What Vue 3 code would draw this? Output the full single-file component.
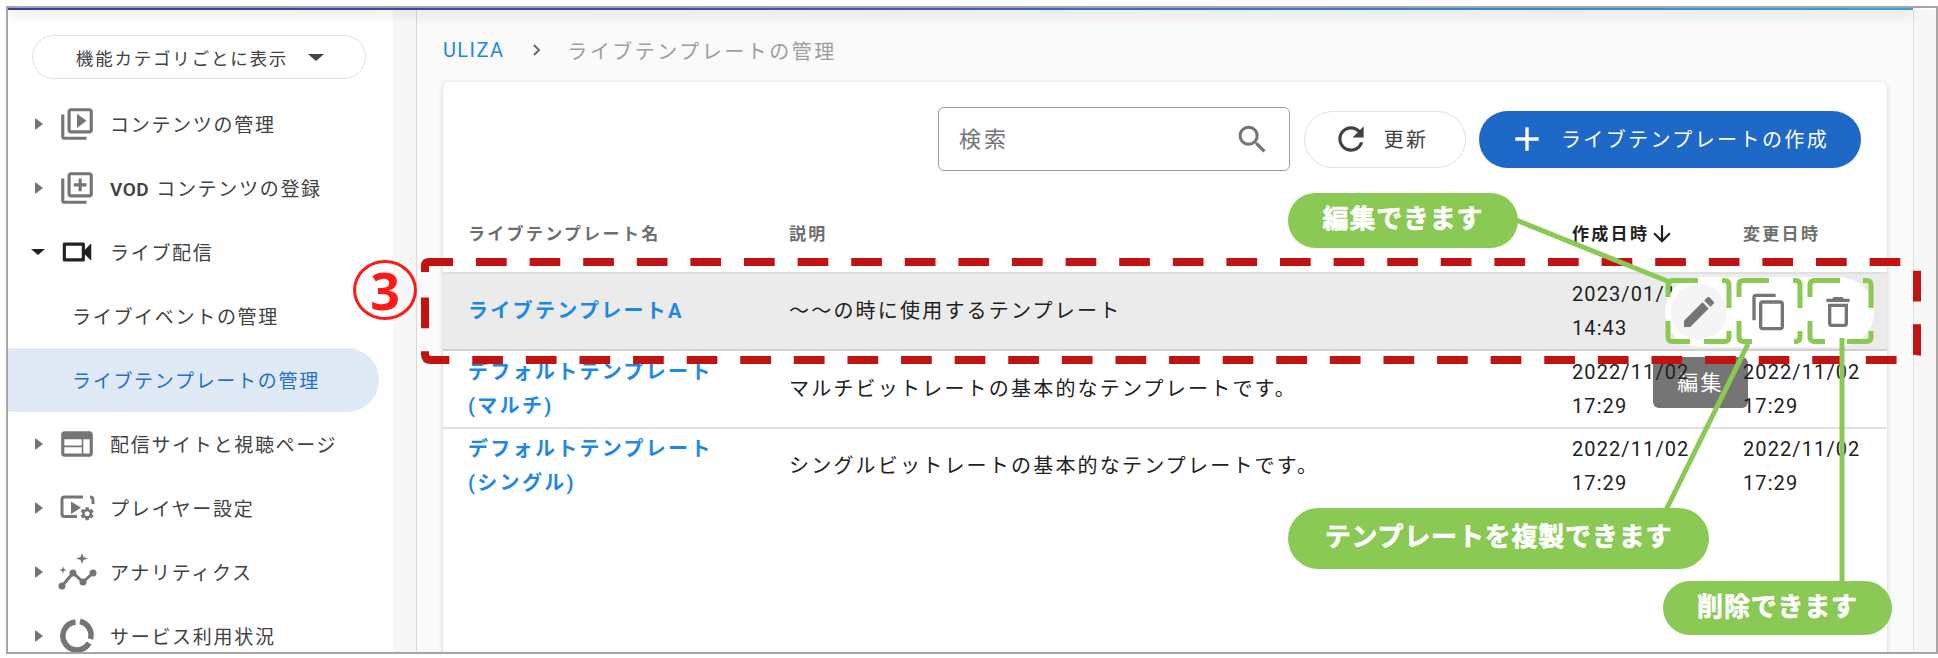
<script setup>
// Sidebar menu
const menu = [
  { label: 'コンテンツの管理', arrow: 'right', icon: 'M4 6H2v14c0 1.1.9 2 2 2h14v-2H4V6zm16-4H8c-1.1 0-2 .9-2 2v12c0 1.1.9 2 2 2h12c1.1 0 2-.9 2-2V4c0-1.1-.9-2-2-2zm0 14H8V4h12v12zM12 5.5v9l6-4.5z' },
  { label: 'コンテンツの登録', prefix: 'VOD', arrow: 'right', icon: 'M4 6H2v14c0 1.1.9 2 2 2h14v-2H4V6zm16-4H8c-1.1 0-2 .9-2 2v12c0 1.1.9 2 2 2h12c1.1 0 2-.9 2-2V4c0-1.1-.9-2-2-2zm0 14H8V4h12v12zm-7-2h2v-3h3V9h-3V6h-2v3h-3v2h3z' },
  { label: 'ライブ配信', arrow: 'down', dark: true, icon: 'M15 8v8H5V8h10m1-2H4c-.55 0-1 .45-1 1v10c0 .55.45 1 1 1h12c.55 0 1-.45 1-1v-3.5l4 4v-11l-4 4V7c0-.55-.45-1-1-1z' },
  { label: 'ライブイベントの管理', sub: true },
  { label: 'ライブテンプレートの管理', sub: true, active: true },
  { label: '配信サイトと視聴ページ', arrow: 'right', icon: 'M20 4H4c-1.1 0-1.99.9-1.99 2L2 18c0 1.1.9 2 2 2h16c1.1 0 2-.9 2-2V6c0-1.1-.9-2-2-2zm-5 14H4v-4h11v4zm0-5H4V9h11v4zm5 5h-4V9h4v9z' },
  { label: 'プレイヤー設定', arrow: 'right', custom: 'player' },
  { label: 'アナリティクス', arrow: 'right', custom: 'graph' },
  { label: 'サービス利用状況', arrow: 'right', custom: 'ring' }
]

const gear = 'M19.14 12.94c.04-.3.06-.61.06-.94 0-.32-.02-.64-.07-.94l2.03-1.58c.18-.14.23-.41.12-.61l-1.92-3.32c-.12-.22-.37-.29-.59-.22l-2.39.96c-.5-.38-1.03-.7-1.62-.94l-.36-2.54c-.04-.24-.24-.41-.48-.41h-3.84c-.24 0-.43.17-.47.41l-.36 2.54c-.59.24-1.13.57-1.62.94l-2.39-.96c-.22-.08-.47 0-.59.22L2.74 8.87c-.12.21-.08.47.12.61l2.03 1.58c-.05.3-.09.63-.09.94s.02.64.07.94l-2.03 1.58c-.18.14-.23.41-.12.61l1.92 3.32c.12.22.37.29.59.22l2.39-.96c.5.38 1.03.7 1.62.94l.36 2.54c.05.24.24.41.48.41h3.84c.24 0 .44-.17.47-.41l.36-2.54c.59-.24 1.13-.56 1.62-.94l2.39.96c.22.08.47 0 .59-.22l1.92-3.32c.12-.22.07-.47-.12-.61l-2.01-1.58zM12 15.6c-1.98 0-3.6-1.62-3.6-3.6s1.62-3.6 3.6-3.6 3.6 1.62 3.6 3.6-1.62 3.6-3.6 3.6z'

// Table rows
const rows = [
  { name: ['ライブテンプレートA'], desc: '〜〜の時に使用するテンプレート', created: ['2023/01/10', '14:43'], updated: ['2023/01/10', '14:43'], hover: true },
  { name: ['デフォルトテンプレート', '(マルチ)'], desc: 'マルチビットレートの基本的なテンプレートです。', created: ['2022/11/02', '17:29'], updated: ['2022/11/02', '17:29'], tip: true },
  { name: ['デフォルトテンプレート', '(シングル)'], desc: 'シングルビットレートの基本的なテンプレートです。', created: ['2022/11/02', '17:29'], updated: ['2022/11/02', '17:29'] }
]

const actions = [
  { key: 'edit', d: 'M3 17.25V21h3.75L17.81 9.94l-3.75-3.75L3 17.25zM20.71 7.04c.39-.39.39-1.02 0-1.41l-2.34-2.34c-.39-.39-1.02-.39-1.41 0l-1.83 1.83 3.75 3.75 1.83-1.83z' },
  { key: 'copy', d: 'M16 1H4c-1.1 0-2 .9-2 2v14h2V3h12V1zm3 4H8c-1.1 0-2 .9-2 2v14c0 1.1.9 2 2 2h11c1.1 0 2-.9 2-2V7c0-1.1-.9-2-2-2zm0 16H8V7h11v14z' },
  { key: 'trash', d: 'M6 19c0 1.1.9 2 2 2h8c1.1 0 2-.9 2-2V7H6v12zM8 9h8v10H8V9zm7.5-5l-1-1h-5l-1 1H5v2h14V4z' }
]

// Green dashed brackets around the action buttons
const bracket = (x0, x1, topA, topB, botA, botB) =>
  `M${x0} 297V285Q${x0} 280.5 ${x0 + 4.5} 280.5H${topA}M${topB} 280.5H${x1 - 4.5}Q${x1} 280.5 ${x1} 285V308` +
  `M${x1} 331V337Q${x1} 341.5 ${x1 - 4.5} 341.5H${botB}M${botA} 341.5H${x0 + 4.5}Q${x0} 341.5 ${x0} 337V321`

const brackets = [
  bracket(1668, 1729, 1698, 1722, 1690, 1704),
  bracket(1739, 1800, 1769, 1793, 1752, 1794),
  bracket(1810, 1871, 1840, 1863, 1825, 1847)
]
</script>

<template>
  <div class="page">
    <div class="window">
      <div class="topline"></div>
      <div class="body">
        <aside class="sidebar">
          <div class="nav">
            <button class="category">
              <span>機能カテゴリごとに表示</span>
              <i class="tri-down big"></i>
            </button>
            <ul class="menu">
              <li v-for="item in menu" :key="item.label" class="item" :class="{ sub: item.sub, active: item.active }">
                <template v-if="!item.sub">
                  <span class="arrow"><i :class="item.arrow === 'down' ? 'tri-down' : 'tri-right'"></i></span>
                  <svg v-if="item.icon" class="micon" :class="{ dark: item.dark }" viewBox="0 0 24 24"><path :d="item.icon" /></svg>
                  <svg v-else-if="item.custom === 'player'" class="micon" viewBox="0 0 38 38">
                    <path d="M25 8H6.500Q4 8 4 10.500V25Q4 27.500 6.500 27.500H19" fill="none" stroke="#757575" stroke-width="3" />
                    <path d="M33 8H32Q35 8 35 11V15" fill="none" stroke="#757575" stroke-width="3" />
                    <path d="M13 12.500V25L23 18.700Z" />
                    <path :d="gear" transform="translate(21 16.500) scale(.68)" />
                  </svg>
                  <svg v-else-if="item.custom === 'graph'" class="micon" viewBox="0 -5 38 38">
                    <path d="M4 28L15 15L25 24L35 15" fill="none" stroke="#757575" stroke-width="3" />
                    <circle cx="4" cy="28" r="3.500" /><circle cx="15" cy="15" r="3.500" /><circle cx="25" cy="24" r="3.500" /><circle cx="35" cy="15" r="3.500" />
                    <path d="M24 -5L25.500 -1L30 0.500L25.500 2L24 6L22.500 2L18 0.500L22.500 -1Z" />
                    <path d="M5 8L5.800 11L8.500 12L5.800 13L5 16L4.200 13L1.500 12L4.200 11Z" />
                  </svg>
                  <svg v-else class="micon" viewBox="0 0 38 38">
                    <path d="M22 4.500A14 14 0 0 1 32.500 22" fill="none" stroke="#757575" stroke-width="5.500" />
                    <path d="M31 26A14 14 0 1 1 17.500 5" fill="none" stroke="#757575" stroke-width="5.500" />
                  </svg>
                </template>
                <span class="label"><b v-if="item.prefix">{{ item.prefix }}</b>{{ item.label }}</span>
              </li>
            </ul>
          </div>
          <div class="nav-track"></div>
        </aside>

        <main class="main">
          <nav class="crumbs">
            <a>ULIZA</a>
            <svg class="crumb-sep" viewBox="0 0 8 12"><path d="M1 1l5 5-5 5" /></svg>
            <span>ライブテンプレートの管理</span>
          </nav>

          <section class="card">
            <div class="toolbar">
              <label class="search">
                <span>検索</span>
                <svg viewBox="0 0 24 24"><path d="M15.500 14h-.79l-.28-.27C15.410 12.590 16 11.110 16 9.500 16 5.910 13.090 3 9.500 3S3 5.910 3 9.500 5.910 16 9.500 16c1.610 0 3.090-.59 4.230-1.570l.27.28v.79l5 4.990L20.490 19l-4.990-5zm-6 0C7.010 14 5 11.990 5 9.500S7.010 5 9.500 5 14 7.010 14 9.500 11.990 14 9.500 14z" /></svg>
              </label>
              <button class="btn refresh">
                <svg viewBox="0 0 24 24"><path d="M17.650 6.350C16.200 4.900 14.210 4 12 4c-4.420 0-7.990 3.580-7.990 8s3.570 8 7.990 8c3.730 0 6.840-2.550 7.730-6h-2.080c-.82 2.330-3.040 4-5.650 4-3.310 0-6-2.690-6-6s2.690-6 6-6c1.660 0 3.140.69 4.220 1.780L13 11h7V4l-2.350 2.350z" /></svg>
                <span>更新</span>
              </button>
              <button class="btn create">
                <svg viewBox="0 0 24 24"><path d="M19 13h-6v6h-2v-6H5v-2h6V5h2v6h6v2z" /></svg>
                <span>ライブテンプレートの作成</span>
              </button>
            </div>

            <div class="thead">
              <span>ライブテンプレート名</span>
              <span>説明</span>
              <span class="sorted">作成日時
                <svg viewBox="0 0 24 24"><path d="M20 12l-1.410-1.410L13 16.170V4h-2v12.170l-5.580-5.590L4 12l8 8 8-8z" /></svg>
              </span>
              <span>変更日時</span>
            </div>

            <div v-for="row in rows" :key="row.desc" class="row" :class="{ hover: row.hover }">
              <div class="name"><div v-for="line in row.name" :key="line">{{ line }}</div></div>
              <div class="desc">{{ row.desc }}</div>
              <div class="date"><div v-for="line in row.created" :key="line">{{ line }}</div></div>
              <div class="date"><div v-for="line in row.updated" :key="line">{{ line }}</div></div>

              <div v-if="row.tip" class="tooltip">編集</div>
              <div v-if="row.hover" class="actions">
                <span v-for="a in actions" :key="a.key" class="action" :class="a.key">
                  <svg viewBox="0 0 24 24"><path :d="a.d" /></svg>
                </span>
              </div>
            </div>
          </section>
        </main>

        <div class="scroll-track"></div>
      </div>
    </div>

    <!-- annotations drawn on top of the screenshot -->
    <svg class="marks" width="1938" height="658" viewBox="0 0 1938 658">
      <g fill="none" stroke="#c21313" stroke-width="8">
        <path d="M453 262H429Q425 262 425 266V272" />
        <path d="M476 262H1911Q1917 262 1917 268V354Q1917 360 1911 360H431Q425 360 425 354V296" stroke-dasharray="30.700 22.900" />
      </g>
      <g fill="none" stroke="#8bc955" stroke-width="5">
        <path d="M1516 220L1672 283" />
        <path d="M1666 510L1748 344" />
        <path d="M1842 338V582" />
        <path v-for="d in brackets" :key="d" :d="d" />
      </g>
    </svg>
    <div class="circled">3</div>
    <div class="bubble b-edit">編集できます</div>
    <div class="bubble b-copy">テンプレートを複製できます</div>
    <div class="bubble b-delete">削除できます</div>
  </div>
</template>

<style scoped>
.page {
  position: relative;
  width: 1938px;
  height: 658px;
  background: #fff;
  overflow: hidden;
  font-family: Roboto, "Noto Sans CJK JP", sans-serif;
  color: #212121;
}

.window {
  box-sizing: border-box;
  width: 1932px;
  height: 648px;
  margin: 6px 0 0 6px;
  border: 2px solid #a8a4a4;
  overflow: hidden;
  display: flex;
  flex-direction: column;
}

.topline {
  position: relative;
  z-index: 2;
  flex: none;
  width: 1905px;
  height: 2px;
  background: linear-gradient(90deg, #2f3fa5, #3f51b5 40%, #29a9df);
  box-shadow: 0 3px 12px rgba(0, 0, 0, .35);
}

.body {
  flex: 1;
  display: flex;
  min-height: 0;
}

/* sidebar */
.sidebar {
  flex: none;
  display: flex;
  width: 408px;
  border-right: 1px solid #d8d8d8;
}

.nav {
  width: 385px;
  background: #fff;
}

.nav-track {
  flex: 1;
  background: #f7f7f7;
}

.category {
  display: flex;
  align-items: center;
  justify-content: center;
  gap: 20px;
  box-sizing: border-box;
  width: 334px;
  height: 44px;
  margin: 25px 0 13px 24px;
  padding: 0 0 0 2px;
  border: 1px solid #e0e0e0;
  border-radius: 22px;
  background: #fff;
  font: inherit;
  font-size: 17.500px;
  letter-spacing: 1.800px;
  color: #424242;
}

.menu {
  margin: 0;
  padding: 0;
  list-style: none;
}

.item {
  display: flex;
  align-items: center;
  height: 64px;
  margin-right: 14px;
  font-size: 19px;
  letter-spacing: 1.700px;
  color: #424242;
}

.item.sub {
  padding-left: 64px;
}

.item.active {
  border-radius: 0 32px 32px 0;
  background: #e0eaf7;
  color: #1e6fd0;
}

.arrow {
  display: flex;
  justify-content: center;
  width: 50px;
}

.tri-right {
  width: 0;
  height: 0;
  border-left: 8px solid #757575;
  border-top: 6.500px solid transparent;
  border-bottom: 6.500px solid transparent;
  margin-left: 12px;
}

.tri-down {
  width: 0;
  height: 0;
  border-top: 6.500px solid #212121;
  border-left: 7px solid transparent;
  border-right: 7px solid transparent;
  margin-left: 10px;
}

.tri-down.big {
  margin-left: 0;
  border-top-width: 7px;
  border-left-width: 8px;
  border-right-width: 8px;
  border-top-color: #424242;
}

.micon {
  flex: none;
  width: 38px;
  height: 38px;
  margin-right: 14px;
  fill: #757575;
  overflow: visible;
}

.micon.dark {
  fill: #212121;
}

.label {
  margin-top: -2px;
}

.label b {
  margin-right: 7px;
  font-weight: 600;
  letter-spacing: .5px;
}

/* main area */
.main {
  flex: 1;
  min-width: 0;
  padding: 0 26px;
  background: #fafafa;
}

.crumbs {
  display: flex;
  align-items: center;
  box-sizing: border-box;
  height: 72px;
  padding-top: 8px;
  font-size: 20px;
  letter-spacing: 2.500px;
  color: #9e9e9e;
}

.crumbs a {
  color: #1e88e5;
  letter-spacing: 1.400px;
}

.crumb-sep {
  width: 8px;
  height: 12px;
  margin: 0 26px 0 29px;
  fill: none;
  stroke: #616161;
  stroke-width: 1.800;
}

.card {
  height: 640px;
  padding-top: 25px;
  border-radius: 6px;
  background: #fff;
  box-shadow: 0 1px 5px rgba(0, 0, 0, .18);
}

.toolbar {
  display: flex;
  align-items: center;
  justify-content: flex-end;
  gap: 13px;
  height: 64px;
  padding-right: 26px;
}

.search {
  flex: none;
  display: flex;
  align-items: center;
  justify-content: space-between;
  box-sizing: border-box;
  width: 352px;
  height: 64px;
  margin-right: 1px;
  padding: 0 20px;
  border: 1.500px solid #9e9e9e;
  border-radius: 6px;
  font-size: 22px;
  letter-spacing: 3px;
  color: #757575;
}

.search span {
  margin-top: -4px;
}

.search svg {
  width: 37px;
  height: 37px;
  margin-right: -2px;
  fill: #757575;
}

.btn {
  flex: none;
  display: flex;
  align-items: center;
  justify-content: center;
  box-sizing: border-box;
  height: 57px;
  border-radius: 29px;
  font: inherit;
  font-size: 20px;
  letter-spacing: 2.200px;
}

.btn span {
  margin-top: -2px;
}

.refresh {
  width: 162px;
  padding-right: 16px;
  border: 1.500px solid #e0e0e0;
  background: #fff;
  color: #424242;
  gap: 14px;
}

.refresh svg {
  width: 38px;
  height: 38px;
  fill: #424242;
}

.create {
  width: 382px;
  padding-right: 10px;
  border: none;
  background: #1e69c8;
  color: #fff;
  gap: 14px;
  letter-spacing: 2.400px;
}

.create svg {
  width: 40px;
  height: 40px;
  fill: #fff;
}

.thead,
.row {
  display: grid;
  grid-template-columns: 321px 783px 171px 1fr;
  padding-left: 25px;
}

.thead {
  align-items: end;
  box-sizing: border-box;
  height: 103px;
  padding-bottom: 25px;
  border-bottom: 2px solid #e0e0e0;
  font-size: 17px;
  font-weight: 700;
  letter-spacing: 2.300px;
  line-height: 26px;
  color: #6e6e6e;
}

.sorted {
  display: flex;
  align-items: center;
  gap: 0;
  color: #212121;
}

.sorted svg {
  width: 26px;
  height: 26px;
  fill: #212121;
}

.row {
  position: relative;
  align-items: center;
  height: 78px;
  box-sizing: border-box;
  padding-bottom: 1px;
  border-bottom: 2px solid #e0e0e0;
  font-size: 20px;
  letter-spacing: 2.200px;
  line-height: 34px;
}

.row:last-child {
  height: 74px;
  border-bottom: none;
}

.row.hover {
  height: 77px;
  background: #ebebeb;
  border-bottom-color: #cfcfcf;
}

.name,
.desc,
.date {
  position: relative;
  z-index: 1;
}

.name {
  font-weight: 700;
  letter-spacing: 2.300px;
  color: #1e88e5;
}

.date {
  letter-spacing: 1.100px;
}

.tooltip {
  position: absolute;
  z-index: 0;
  left: 1210px;
  top: 6px;
  width: 95px;
  height: 51px;
  border-radius: 6px;
  background: #757575;
  color: #fff;
  font-size: 21px;
  line-height: 52px;
  text-align: center;
}

.actions {
  position: absolute;
  z-index: 2;
  top: 3px;
  right: 13px;
  display: flex;
  justify-content: space-between;
  align-items: center;
  box-sizing: border-box;
  width: 209px;
  height: 70px;
  padding: 0 8px 0 6px;
  border-radius: 35px;
  background: #fff;
}

.action {
  display: flex;
  align-items: center;
  justify-content: center;
  width: 56px;
  height: 56px;
  border-radius: 50%;
}

.action svg {
  width: 40px;
  height: 40px;
  fill: #757575;
}

.action.edit {
  background: #f5f5f5;
}

.scroll-track {
  flex: none;
  box-sizing: border-box;
  width: 23px;
  background: #f7f7f7;
  border-left: 1px solid #e0e0e0;
}

/* annotations */
.marks {
  position: absolute;
  z-index: 3;
  left: 0;
  top: 0;
  pointer-events: none;
}

.circled {
  position: absolute;
  z-index: 4;
  left: 353px;
  top: 260px;
  box-sizing: border-box;
  width: 64px;
  height: 60px;
  border: 3px solid #ff1a1a;
  border-radius: 50%;
  color: #ff1a1a;
  font-family: "Noto Sans", sans-serif;
  font-size: 52px;
  font-weight: 700;
  line-height: 53px;
  text-align: center;
}

.bubble {
  position: absolute;
  z-index: 4;
  display: flex;
  align-items: center;
  justify-content: center;
  box-sizing: border-box;
  padding-bottom: 8px;
  background: #8bc955;
  color: #fff;
  font-family: "Noto Sans CJK JP", sans-serif;
  font-size: 26px;
  font-weight: 700;
  letter-spacing: .8px;
  -webkit-text-stroke: .6px #fff;
}

.b-edit {
  left: 1288px;
  top: 193px;
  width: 230px;
  height: 55px;
  border-radius: 28px;
}

.b-copy {
  left: 1288px;
  top: 508px;
  width: 421px;
  height: 61px;
  border-radius: 31px;
}

.b-delete {
  left: 1663px;
  top: 581px;
  width: 229px;
  height: 54px;
  border-radius: 27px;
}
</style>
